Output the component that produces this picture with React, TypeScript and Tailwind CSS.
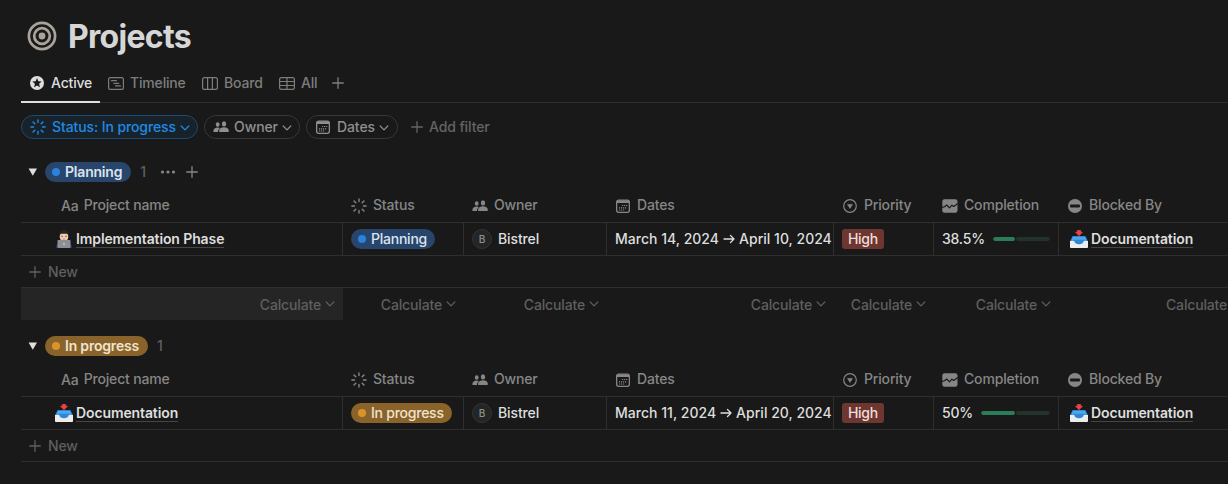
import React from "react";

type IconProps = { className?: string };

const Plus = ({ className = "" }: IconProps) => (
  <svg viewBox="0 0 12 12" className={`h-3 w-3 shrink-0 ${className}`} fill="none" stroke="currentColor" strokeWidth="1.3" strokeLinecap="round">
    <path d="M6 .7v10.6M.7 6h10.6" />
  </svg>
);

const Chevron = ({ className = "" }: IconProps) => (
  <svg viewBox="0 0 10 6" className={`h-[6px] w-[10px] shrink-0 ${className}`} fill="none" stroke="currentColor" strokeWidth="1.2" strokeLinecap="round" strokeLinejoin="round">
    <path d="M1.2 1 5 4.8 8.8 1" />
  </svg>
);

const Burst = ({ className = "" }: IconProps) => (
  <svg viewBox="0 0 16 16" className={`h-4 w-4 shrink-0 ${className}`} fill="none" stroke="currentColor" strokeWidth="1.4" strokeLinecap="round">
    <path d="M8 .9v2.600M8 12.500v2.600M.9 8h2.600M12.500 8h2.600M3 3l1.800 1.800M11.200 11.200l1.800 1.800M3 13l1.800-1.800M11.200 4.800 13 3" />
  </svg>
);

const People = ({ className = "" }: IconProps) => (
  <svg viewBox="0 0 16 12" className={`h-3 w-4 shrink-0 ${className}`} fill="currentColor">
    <ellipse cx="4.700" cy="3.500" rx="1.900" ry="2.200" />
    <ellipse cx="11" cy="2.900" rx="2.200" ry="2.600" />
    <path d="M.3 10.200C.3 8.200 2.300 6.500 4.700 6.500c.9 0 1.700.2 2.300.6C5.700 8 5 9.400 5 11H1.100C.6 11 .3 10.700.3 10.200Z" />
    <path d="M6 10c0-2 2.200-3.700 5-3.700S15.900 8 15.900 10c0 .6-.3 1-.9 1H6.900C6.300 11 6 10.600 6 10Z" />
  </svg>
);

const CalendarIcon = ({ className = "" }: IconProps) => (
  <svg viewBox="0 0 14 14" className={`h-[14px] w-[14px] shrink-0 ${className}`} fill="none" stroke="currentColor">
    <rect x=".65" y="1.150" width="12.700" height="12.200" rx="2" strokeWidth="1.300" />
    <path d="M1 2.700h12" strokeWidth="2.600" />
    <path d="M6 6.500h5.500M3 8.800h7.500M3 11h5.500" strokeWidth="1.200" strokeDasharray="1.200 .8" />
  </svg>
);

const SelectIcon = () => (
  <svg viewBox="0 0 14 14" className="mt-px h-[14px] w-[14px] shrink-0" fill="none" stroke="currentColor" strokeWidth="1.200">
    <circle cx="7" cy="7" r="6.300" />
    <path d="M4.500 5.400h5L7 9.400Z" fill="currentColor" strokeWidth=".6" strokeLinejoin="round" />
  </svg>
);

const TrendIcon = () => (
  <svg viewBox="0 0 16 14" className="mt-px h-[14px] w-4 shrink-0">
    <rect x=".3" y=".2" width="15.200" height="13.600" rx="2.200" fill="currentColor" />
    <path d="m0 8.500 2.500-.8L4.700 6l2.800 2.800 2.400-2.600 1.900 1.300L15.800 4.500" fill="none" stroke="#191919" strokeWidth="1.200" strokeLinejoin="round" />
  </svg>
);

const BlockIcon = () => (
  <svg viewBox="0 0 14 14" className="mt-px h-[14px] w-[14px] shrink-0">
    <circle cx="7" cy="7" r="7" fill="currentColor" />
    <rect x="2" y="5.400" width="10" height="3" rx="1" fill="#191919" />
  </svg>
);

const StarIcon = () => (
  <svg viewBox="0 0 14 14" className="h-[14px] w-[14px] shrink-0">
    <circle cx="7" cy="7" r="7" fill="currentColor" />
    <path d="m7 2.100 1.300 3.200 3.400.3-2.600 2.200.8 3.400L7 9.400l-2.900 1.800.8-3.400-2.600-2.200 3.400-.3Z" fill="#191919" />
  </svg>
);

const TimelineIcon = () => (
  <svg viewBox="0 0 16 13" className="h-[13px] w-4 shrink-0" fill="none" stroke="currentColor" strokeWidth="1.200" strokeLinecap="round">
    <rect x=".6" y=".6" width="14.800" height="11.800" rx="1.900" />
    <path d="M3.400 3.700h5M5.800 6.300h5M7.500 8.900h5" />
  </svg>
);

const BoardIcon = () => (
  <svg viewBox="0 0 16 13" className="h-[13px] w-4 shrink-0" fill="none" stroke="currentColor" strokeWidth="1.200">
    <rect x=".6" y=".6" width="14.800" height="11.800" rx="1.900" />
    <path d="M5.600.6v11.800M10.400.6v11.800" />
  </svg>
);

const GridIcon = () => (
  <svg viewBox="0 0 16 13" className="h-[13px] w-4 shrink-0" fill="none" stroke="currentColor" strokeWidth="1.200">
    <rect x=".6" y=".6" width="14.800" height="11.800" rx="1.900" />
    <path d="M8 .6v11.800M.6 4.500h14.800M.6 8.500h14.800" />
  </svg>
);

const Target = () => (
  <svg viewBox="0 0 30 30" className="-mt-[2px] h-[30px] w-[30px] shrink-0" fill="none" stroke="#a9a39b" strokeWidth="2.700">
    <circle cx="15" cy="15" r="13.100" />
    <circle cx="15" cy="15" r="7.800" />
    <circle cx="15" cy="15" r="3.400" fill="#a9a39b" stroke="none" />
  </svg>
);

const Technologist = () => (
  <svg viewBox="0 0 18 18" className="h-[18px] w-[18px] shrink-0">
    <path d="M1.200 17.800c0-3 1.400-4.800 4-5.300h7.600c2.600.5 4 2.300 4 5.300Z" fill="#2b3bbd" />
    <ellipse cx="9" cy="6.500" rx="4.300" ry="5.200" fill="#f2d0b5" />
    <path d="M4.200 6.500C3.600 2 5.500.1 9 .1s5.400 1.900 4.800 6.400c-.5-1.400-1-2.300-1.800-2.800H6C5.200 4.200 4.700 5.100 4.200 6.500Z" fill="#262321" />
    <path d="M6.300 6.300h1.500M10.200 6.300h1.500" stroke="#49362e" strokeWidth=".9" />
    <path d="M7.500 9h3" stroke="#b9796a" strokeWidth=".8" />
    <rect x="2.500" y="10" width="13" height="8" rx=".8" fill="#8d8f92" />
    <circle cx="9" cy="14" r=".8" fill="#ececec" />
  </svg>
);

const Outbox = () => (
  <svg viewBox="0 0 18 18" className="h-[18px] w-[18px] shrink-0">
    <path d="M2.500 6h13L18 11H0Z" fill="#2469ac" />
    <path d="M2.900 6.600h12.200l1.900 4.400-3 .8c-.6 1.700-2.200 2.600-5 2.600s-4.400-.9-5-2.600l-3-.8Z" fill="#4ba5ef" />
    <path d="M2.800 9.800h12.400l-1.600 1.900c-.8 1.800-2.200 2.700-4.600 2.700s-3.800-.9-4.600-2.700Z" fill="#2f86d6" />
    <path d="M0 11h4.200c.7 2.200 2.200 3.200 4.800 3.200s4.100-1 4.800-3.200H18v6.200c0 .5-.3.800-.9.800H.9c-.6 0-.9-.3-.9-.8Z" fill="#ececec" />
    <path d="M7.400.3h3.200v1.900h1.900L9 5.700 5.500 2.200h1.900Z" fill="#ec4444" stroke="#ec4444" strokeWidth=".7" strokeLinejoin="round" />
  </svg>
);

const grid = "grid grid-cols-[322px_121px_143px_227px_100px_125px_1fr]";

type PillProps = { kind: "planning" | "progress"; bold?: boolean };

function StatusPill({ kind, bold }: PillProps) {
  const planning = kind === "planning";
  return (
    <span className={`flex h-5 items-center gap-[5px] rounded-full pl-[7px] ${planning ? "bg-[#28456c] text-[#dbe4ee]" : "bg-[#89632a] text-[#f0e3d0]"} ${bold ? "pr-[9px] font-[600] tracking-[-0.2px]" : "pr-2 font-[480] tracking-[-0.24px]"} ${bold && !planning ? "w-[103px]" : ""} ${!bold && !planning ? "w-[101px]" : ""}`}>
      <span className={`h-2 w-2 shrink-0 rounded-full ${planning ? "bg-[#2783de]" : "bg-[#d9932b]"}`} />
      {planning ? "Planning" : "In progress"}
    </span>
  );
}

function Pill({ icon, label, active, className }: { icon: React.ReactNode; label: string; active?: boolean; className: string }) {
  return (
    <button className={`flex h-6 items-center rounded-full border pl-2 ${active ? "border-[#1b4a72] bg-[#18222a] text-[#1f8be4]" : "border-[#373737] text-[#8f8f8f]"} ${className}`}>
      {icon}
      <span className="font-[460] tracking-[-0.1px]">{label}</span>
      <Chevron className="mt-px ml-1" />
    </button>
  );
}

function HeaderRow() {
  const cell = "flex items-center pl-2";
  return (
    <div className={`${grid} h-[34px] font-[460] tracking-[-0.17px] text-[#868686]`}>
      <div className="flex items-center pl-[40px]">
        <span className="mt-0.5 mr-[5px] tracking-[-0.1px]">Aa</span>Project name
      </div>
      <div className={cell}><Burst className="mt-px mr-1.5" />Status</div>
      <div className={cell}><People className="mt-px mr-1.5" />Owner</div>
      <div className={`${cell} pl-[9px]`}><CalendarIcon className="mt-px mr-[7px]" />Dates</div>
      <div className={`${cell} gap-[7px] pl-[9px]`}><SelectIcon />Priority</div>
      <div className={`${cell} gap-1.5`}><TrendIcon />Completion</div>
      <div className={`${cell} gap-[7px] pl-[9px]`}><BlockIcon />Blocked By</div>
    </div>
  );
}

function PageLink({ icon, label }: { icon: React.ReactNode; label: string }) {
  return (
    <span className="flex items-center gap-[3px]">
      {icon}
      <span className="border-b border-[#454545] leading-4 font-[580] tracking-[-0.11px] text-[#dedede]">{label}</span>
    </span>
  );
}

type Row = { name: string; icon: React.ReactNode; kind: "planning" | "progress"; dates: [string, string]; completion: string; value: number };

function DataRow({ row }: { row: Row }) {
  const cell = "flex items-center border-r border-[#2f2f2f] pl-2";
  return (
    <div className={`${grid} h-[34px] border-y border-[#2f2f2f] font-[480] text-[#dedede]`}>
      <div className={`${cell} pl-[34px]`}><PageLink icon={row.icon} label={row.name} /></div>
      <div className={cell}><StatusPill kind={row.kind} /></div>
      <div className={`${cell} tracking-[-0.12px]`}>
        <span className="mr-1.5 flex h-5 w-5 items-center justify-center rounded-full border border-[#343434] bg-[#252525] text-[10px] font-medium text-[#8f8f8f]">B</span>
        Bistrel
      </div>
      <div className={`${cell} gap-1 overflow-hidden tracking-[0.02px]`}>
        <span>{row.dates[0]}</span>
        <svg viewBox="0 0 12 10" className="h-[10px] w-3 shrink-0" fill="none" stroke="currentColor" strokeWidth="1.300" strokeLinecap="round" strokeLinejoin="round"><path d="M1 5h10M7.500 1.500 11 5 7.500 8.500" /></svg>
        <span>{row.dates[1]}</span>
      </div>
      <div className={cell}><span className="flex h-5 items-center rounded-[3px] bg-[#6e3630] px-1.5 tracking-[-0.3px] text-[#f0dddb]">High</span></div>
      <div className={`${cell} pr-2`}>
        <span className="mr-2 tracking-[-0.22px]">{row.completion}</span>
        <span className="flex h-1 flex-1 gap-px overflow-hidden rounded-full">
          <span className="rounded-full bg-[#2b7d57]" style={{ width: `${row.value}%` }} />
          <span className="flex-1 rounded-full bg-[#22332c]" />
        </span>
      </div>
      <div className="flex items-center pl-[11px]"><PageLink icon={<Outbox />} label="Documentation" /></div>
    </div>
  );
}

function NewRow() {
  return (
    <div className="flex h-8 items-center gap-[7px] border-b border-[#2f2f2f] pl-2 tracking-[-0.15px] text-[#5f5f5f]"><Plus />New</div>
  );
}

const Triangle = () => (
  <svg viewBox="0 0 9 8" className="mr-2 h-2 w-[9px] shrink-0" fill="#dedede"><path d="M.6.4h8.400L4.800 7.800Z" /></svg>
);

function Calculate({ className = "" }: IconProps) {
  return (
    <div className={`flex items-center justify-end gap-1 pt-px pr-2 ${className}`}>
      <span>Calculate</span><Chevron className="-mt-px" />
    </div>
  );
}

export default function App() {
  return (
    <main className="h-[484px] w-[1228px] overflow-hidden bg-[#191919] pl-[21px] font-['Inter',sans-serif] text-[14px] leading-5 font-[450] whitespace-nowrap">
      <header className="flex h-[64px] items-center gap-[11px] pt-[10px] pl-1.5">
        <Target />
        <h1 className="text-[32px] leading-10 font-bold tracking-[-0.7px] text-[#d6d6d6]">Projects</h1>
      </header>
      <nav className="flex h-[39px] border-b border-[#2f2f2f] font-[530] tracking-[-0.17px] text-[#7d7d7d]">
        <div className="-mb-px flex w-[79px] items-center gap-[7px] border-b-2 border-[#dedede] pl-[9px] text-[#dedede]"><StarIcon />Active</div>
        <div className="flex w-[94px] items-center gap-1.5 pl-2"><TimelineIcon />Timeline</div>
        <div className="flex w-[77px] items-center gap-1.5 pl-2"><BoardIcon />Board</div>
        <div className="flex w-[52px] items-center gap-1.5 pl-2"><GridIcon />All</div>
        <div className="flex items-center pl-[9px]"><Plus /></div>
      </nav>
      <div className="mt-3 flex h-6 gap-1.5">
        <Pill className="w-[177px]" active icon={<Burst className="mr-1.5" />} label="Status: In progress" />
        <Pill className="w-[96px]" icon={<People className="mr-[5px]" />} label="Owner" />
        <Pill className="w-[92px]" icon={<CalendarIcon className="mr-[7px] ml-px" />} label="Dates" />
        <div className="flex items-center gap-1.5 pl-[7px] tracking-[-0.12px] text-[#646464]"><Plus />Add filter</div>
      </div>
      <section className="pt-[23px]">
        <div className="mb-1.5 flex h-5 items-center pl-[7px]">
          <Triangle />
          <StatusPill kind="planning" bold />
          <span className="ml-[9px] w-5 text-[#5f5f5f]">1</span>
          <svg viewBox="0 0 16 4" className="mr-[10px] h-1 w-4 text-[#868686]" fill="currentColor"><circle cx="2.500" cy="2" r="1.600" /><circle cx="8" cy="2" r="1.600" /><circle cx="13.500" cy="2" r="1.600" /></svg>
          <Plus className="text-[#868686]" />
        </div>
        <HeaderRow />
        <DataRow row={{ name: "Implementation Phase", icon: <Technologist />, kind: "planning", dates: ["March 14, 2024", "April 10, 2024"], completion: "38.5%", value: 38.5 }} />
        <NewRow />
        <div className={`${grid} h-8 tracking-[-0.16px] text-[#5f5f5f]`}>
          <Calculate className="bg-[#252525]" />
          <Calculate /><Calculate /><Calculate /><Calculate /><Calculate />
          <div className="flex items-center overflow-hidden pt-px pl-[107px]">Calculate</div>
        </div>
      </section>
      <section className="pt-4">
        <div className="mb-1.5 flex h-5 items-center pl-[7px]">
          <Triangle />
          <StatusPill kind="progress" bold />
          <span className="ml-[9px] text-[#5f5f5f]">1</span>
        </div>
        <HeaderRow />
        <DataRow row={{ name: "Documentation", icon: <Outbox />, kind: "progress", dates: ["March 11, 2024", "April 20, 2024"], completion: "50%", value: 50 }} />
        <NewRow />
      </section>
    </main>
  );
}
